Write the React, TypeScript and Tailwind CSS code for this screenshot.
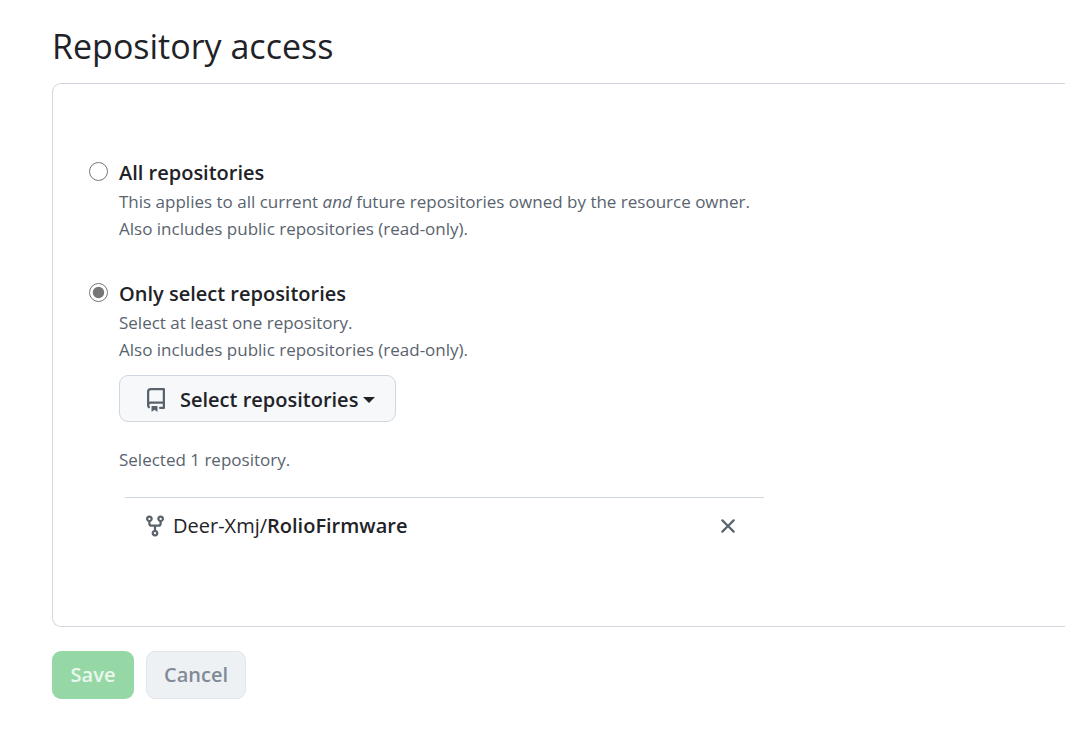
import { useState } from 'react'

type Access = 'all' | 'selected'

export default function App() {
  const [access, setAccess] = useState<Access>('selected')
  const [repos, setRepos] = useState([{ owner: 'Deer-Xmj', name: 'RolioFirmware' }])

  return (
    <main className="min-h-screen bg-white pl-[52px] pt-6 pb-8 text-[20px] text-[#1f2328] font-['Segoe_UI','Open_Sans',sans-serif]">
      <h1 className="text-[34px] leading-[44px] mb-[15px]">Repository access</h1>

      <section className="border border-r-0 border-[#d0d7de] rounded-l-[9px] pl-9 pt-[74px] pb-[72px]">
        <AccessOption
          id="access-all" title="All repositories"
          checked={access === 'all'} onSelect={() => setAccess('all')}
        >
          <p>This applies to all current <em>and</em> future repositories owned by the resource owner.</p>
          <p>Also includes public repositories (read-only).</p>
        </AccessOption>

        <div className="mt-[37px]">
          <AccessOption
            id="access-selected" title="Only select repositories"
            checked={access === 'selected'} onSelect={() => setAccess('selected')}
          >
            <p>Select at least one repository.</p>
            <p>Also includes public repositories (read-only).</p>
          </AccessOption>
        </div>

        {/* Picker and the repositories chosen so far */}
        <div className="pl-[30px]">
          <button type="button" className="mt-3 flex h-[47px] items-center rounded-[9px] border border-[#d0d7de] bg-[#f6f8fa] pt-[3px] pl-6 pr-5 font-semibold">
            <RepoIcon />
            <span className="ml-3">Select repositories</span>
            <span className="ml-[5px] border-x-6 border-t-6 border-x-transparent border-t-[#1f2328]" />
          </button>
          <p className="mt-6 text-[17px] leading-[27px] text-[#59636e]">Selected 1 repository.</p>
          <ul className="ml-[6px] mt-6 max-w-[639px] border-t border-[#d0d7de]">
            {repos.map((repo) => (
              <li key={repo.name} className="flex h-14 items-center pl-[18px] pr-6">
                <ForkIcon />
                <span className="ml-[6px]">{repo.owner}/<strong className="font-semibold">{repo.name}</strong></span>
                <button
                  type="button" aria-label={`Remove ${repo.name}`} className="ml-auto"
                  onClick={() => setRepos(repos.filter((r) => r !== repo))}
                >
                  <CloseIcon />
                </button>
              </li>
            ))}
          </ul>
        </div>
      </section>

      <div className="mt-6 flex gap-3 font-semibold">
        <button type="button" disabled className="h-12 w-[82px] rounded-[9px] bg-[#95d8a6] text-[#eaf7ed]">Save</button>
        <button type="button" className="h-12 w-[100px] rounded-[9px] border border-[#e2e7ec] bg-[#eef1f4] text-[#818b98]">Cancel</button>
      </div>
    </main>
  )
}

function AccessOption({ id, title, checked, onSelect, children }: {
  id: string; title: string; checked: boolean; onSelect: () => void; children: React.ReactNode
}) {
  return (
    <div className="flex items-start">
      <input
        type="radio" name="access" id={id} checked={checked} onChange={onSelect}
        className="mt-1 h-[19px] w-[19px] shrink-0 accent-[#767676]"
      />
      <div className="ml-[11px]">
        <label htmlFor={id} className="block leading-[30px] font-semibold">{title}</label>
        <div className="text-[17px] leading-[27px] text-[#59636e]">{children}</div>
      </div>
    </div>
  )
}

function RepoIcon() {
  return (
    <svg viewBox="0 0 16 16" className="h-6 w-6 shrink-0 fill-[#59636e]" aria-hidden="true">
      <path d="M2 2.5A2.5 2.5 0 0 1 4.5 0h8.75a.75.75 0 0 1 .75.75v12.5a.75.75 0 0 1-.75.75h-2.5a.75.75 0 0 1 0-1.5h1.75v-2h-8a1 1 0 0 0-.714 1.7.75.75 0 1 1-1.072 1.05A2.495 2.495 0 0 1 2 11.5Zm10.5-1h-8a1 1 0 0 0-1 1v6.708A2.486 2.486 0 0 1 4.5 9h8ZM5 12.25a.25.25 0 0 1 .25-.25h3.5a.25.25 0 0 1 .25.25v3.25a.25.25 0 0 1-.4.2l-1.45-1.087a.249.249 0 0 0-.3 0L5.4 15.7a.25.25 0 0 1-.4-.2Z" />
    </svg>
  )
}

function ForkIcon() {
  return (
    <svg viewBox="0 0 16 16" className="h-6 w-6 shrink-0 fill-[#59636e]" aria-hidden="true">
      <path d="M5 5.372v.878c0 .414.336.75.75.75h4.5a.75.75 0 0 0 .75-.75v-.878a2.25 2.25 0 1 1 1.5 0v.878a2.25 2.25 0 0 1-2.25 2.25h-1.5v2.128a2.251 2.251 0 1 1-1.5 0V8.5h-1.5A2.25 2.25 0 0 1 3.5 6.25v-.878a2.25 2.25 0 1 1 1.5 0ZM5 3.25a.75.75 0 1 0-1.5 0 .75.75 0 0 0 1.5 0Zm6.75.75a.75.75 0 1 0 0-1.5.75.75 0 0 0 0 1.5Zm-3 8.75a.75.75 0 1 0-1.5 0 .75.75 0 0 0 1.5 0Z" />
    </svg>
  )
}

function CloseIcon() {
  return (
    <svg viewBox="0 0 16 16" className="h-6 w-6 fill-[#59636e]" aria-hidden="true">
      <path d="M3.72 3.72a.75.75 0 0 1 1.06 0L8 6.94l3.22-3.22a.749.749 0 0 1 1.275.326.749.749 0 0 1-.215.734L9.06 8l3.22 3.22a.749.749 0 0 1-.326 1.275.749.749 0 0 1-.734-.215L8 9.06l-3.22 3.22a.751.751 0 0 1-1.042-.018.751.751 0 0 1-.018-1.042L6.94 8 3.72 4.78a.75.75 0 0 1 0-1.06Z" />
    </svg>
  )
}
